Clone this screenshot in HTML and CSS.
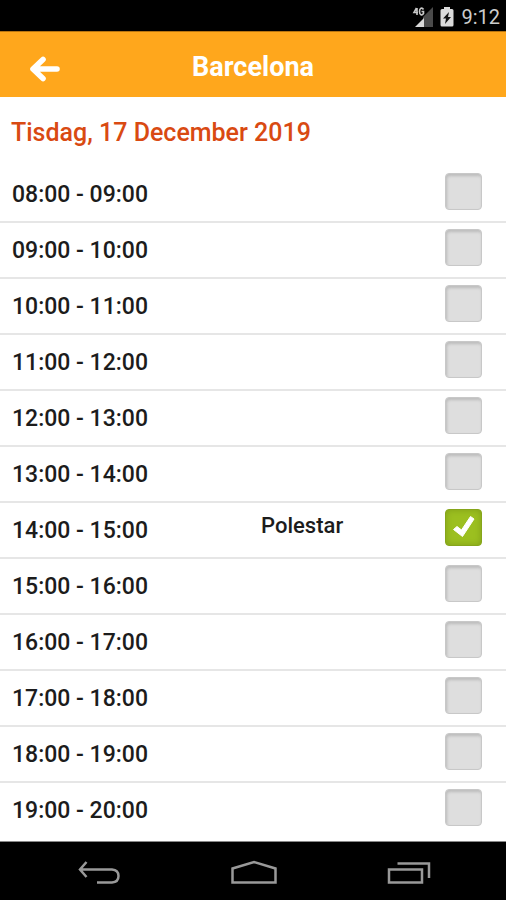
FILE: index.html
```html
<!DOCTYPE html>
<html lang="sv">
<head>
<meta charset="utf-8">
<meta name="viewport" content="width=device-width, initial-scale=1">
<title>Barcelona</title>
<link rel="stylesheet" href="styles.css">
</head>
<body>
<div class="status">
  <svg class="signal" viewBox="0 0 22 22" aria-hidden="true">
    <path d="M21 1V21H11V11Z" fill="#4a4a4a"/>
    <path d="M12 12V21H3Z" fill="#d8d8d8"/>
    <path d="M4.500 2 2 6.500H6M5 2V9M11.500 3.500C10 1 7.500 2 7.500 5.500S10 10 11.500 7.500V5.500H9.500" fill="none" stroke="#c8c8c8" stroke-width="1.600"/>
  </svg>
  <svg class="battery" viewBox="0 0 14 20" aria-hidden="true">
    <path d="M4 0H10V2H12Q13.500 2 13.500 3.500V18Q13.500 19.500 12 19.500H2Q.5 19.500 .5 18V3.500Q.5 2 2 2H4Z" fill="#dadada"/>
    <path d="M9 5 3 11.500H6L5 17 11 10H8Z" fill="#111"/>
  </svg>
  <time>9:12</time>
</div>
<header class="header">
  <button class="back" type="button" aria-label="Tillbaka">
    <svg viewBox="0 0 32 26" aria-hidden="true"><path d="M15 3.500 5 13 15 22.500M6 13H29" fill="none" stroke="#fff" stroke-width="5.600" stroke-linecap="round" stroke-linejoin="round"/></svg>
  </button>
  <h1>Barcelona</h1>
</header>
<main class="main">
  <h2>Tisdag, 17 December 2019</h2>
  <ul class="slots">
    <li><label for="s08">08:00 - 09:00</label><input type="checkbox" id="s08"></li>
    <li><label for="s09">09:00 - 10:00</label><input type="checkbox" id="s09"></li>
    <li><label for="s10">10:00 - 11:00</label><input type="checkbox" id="s10"></li>
    <li><label for="s11">11:00 - 12:00</label><input type="checkbox" id="s11"></li>
    <li><label for="s12">12:00 - 13:00</label><input type="checkbox" id="s12"></li>
    <li><label for="s13">13:00 - 14:00</label><input type="checkbox" id="s13"></li>
    <li><label for="s14">14:00 - 15:00</label><span class="booked">Polestar</span><span class="checked"><input type="checkbox" id="s14" checked><svg viewBox="0 0 37 37" aria-hidden="true"><path d="M8.500 20.500 12 17.500 16.500 21 25.500 7.500 29 10 17.500 27.500Z" fill="#fff" stroke="#fff" stroke-width="1" stroke-linejoin="round"/></svg></span></li>
    <li><label for="s15">15:00 - 16:00</label><input type="checkbox" id="s15"></li>
    <li><label for="s16">16:00 - 17:00</label><input type="checkbox" id="s16"></li>
    <li><label for="s17">17:00 - 18:00</label><input type="checkbox" id="s17"></li>
    <li><label for="s18">18:00 - 19:00</label><input type="checkbox" id="s18"></li>
    <li><label for="s19">19:00 - 20:00</label><input type="checkbox" id="s19"></li>
  </ul>
</main>
<nav class="nav" aria-label="System">
  <button type="button" aria-label="Bakåt"><svg viewBox="0 0 48 28" aria-hidden="true"><path d="M11.500 3 5 10.500 11.500 18M5 10.500H37Q43.500 11 43.500 17T37 23.500H22" fill="none" stroke="#999" stroke-width="2.500"/></svg></button>
  <button type="button" aria-label="Hem"><svg viewBox="0 0 48 28" aria-hidden="true"><path d="M2.500 23.500V9.500L24 3 45.500 9.500V23.500Z" fill="none" stroke="#999" stroke-width="2.500"/></svg></button>
  <button type="button" aria-label="Senaste"><svg viewBox="0 0 48 28" aria-hidden="true"><path d="M4 10.500H37V23.500H4ZM12.500 4.500H44V19" fill="none" stroke="#999" stroke-width="2.500"/></svg></button>
</nav>
</body>
</html>
```
FILE: styles.css
```css
* { box-sizing: border-box; }

body {
  margin: 0;
  min-height: 100vh;
  display: flex;
  flex-direction: column;
  background: #fff;
  color: #1c1c1c;
  font-family: Roboto, "Liberation Sans", sans-serif;
}

h1, h2, ul { margin: 0; padding: 0; }

button {
  padding: 0;
  border: 0;
  background: none;
  cursor: pointer;
}

svg { display: block; }

.status {
  display: flex;
  align-items: center;
  justify-content: flex-end;
  height: 31px;
  padding: 2px 6px 0 0;
  background: #000;
  color: #ccc;
  font-size: 20px;
}

.signal { width: 22px; height: 22px; margin-right: 6px; }
.battery { width: 14px; height: 20px; margin-right: 7px; }

.header {
  display: grid;
  grid-template-columns: 60px 1fr 60px;
  align-items: center;
  height: 66px;
  background: #ffa71c;
  border-top: 1px solid #b87510;
}

.back { justify-self: end; padding-top: 8px; }
.back svg { width: 32px; height: 26px; }

.header h1 {
  padding-top: 4px;
  color: #fff;
  font-size: 27px;
  line-height: 32px;
  font-weight: 700;
  text-align: center;
}

.main { flex: 1; }

.main h2 {
  padding: 20px 11px 18px;
  color: #d94a12;
  font-size: 25px;
  line-height: 32px;
  font-weight: 500;
}

.slots { list-style: none; }

.slots li {
  display: grid;
  grid-template-columns: 53% 1fr 37px;
  align-items: start;
  height: 56px;
  padding: 6px 24px 0 12px;
  border-bottom: 2px solid #e6e6e6;
  font-size: 22px;
  line-height: 28px;
  font-weight: 500;
}

.slots li:last-child { border-bottom: 0; }
.slots label { padding-top: 8px; font-size: 23px; }
.booked { padding-top: 3px; }

.slots input {
  appearance: none;
  grid-column: 3;
  width: 37px;
  height: 37px;
  margin: 0;
  border: 1px solid #c8c8c8;
  border-radius: 4px;
  background: #dedede;
  box-shadow: inset 1px 2px 3px #bcbcbc;
}

.slots input:checked {
  border-color: #86a51b;
  background: #9cbf20;
  box-shadow: inset 0 0 6px #7f9f18;
}

.checked { display: grid; grid-column: 3; }
.checked input { grid-area: 1 / 1; }
.checked svg { grid-area: 1 / 1; width: 37px; height: 37px; pointer-events: none; }

.nav {
  display: flex;
  align-items: center;
  justify-content: space-around;
  height: 59px;
  padding: 4px 20px 0 22px;
  background: #000;
  border-top: 1px solid #888;
}

.nav svg { width: 48px; height: 28px; }
```
